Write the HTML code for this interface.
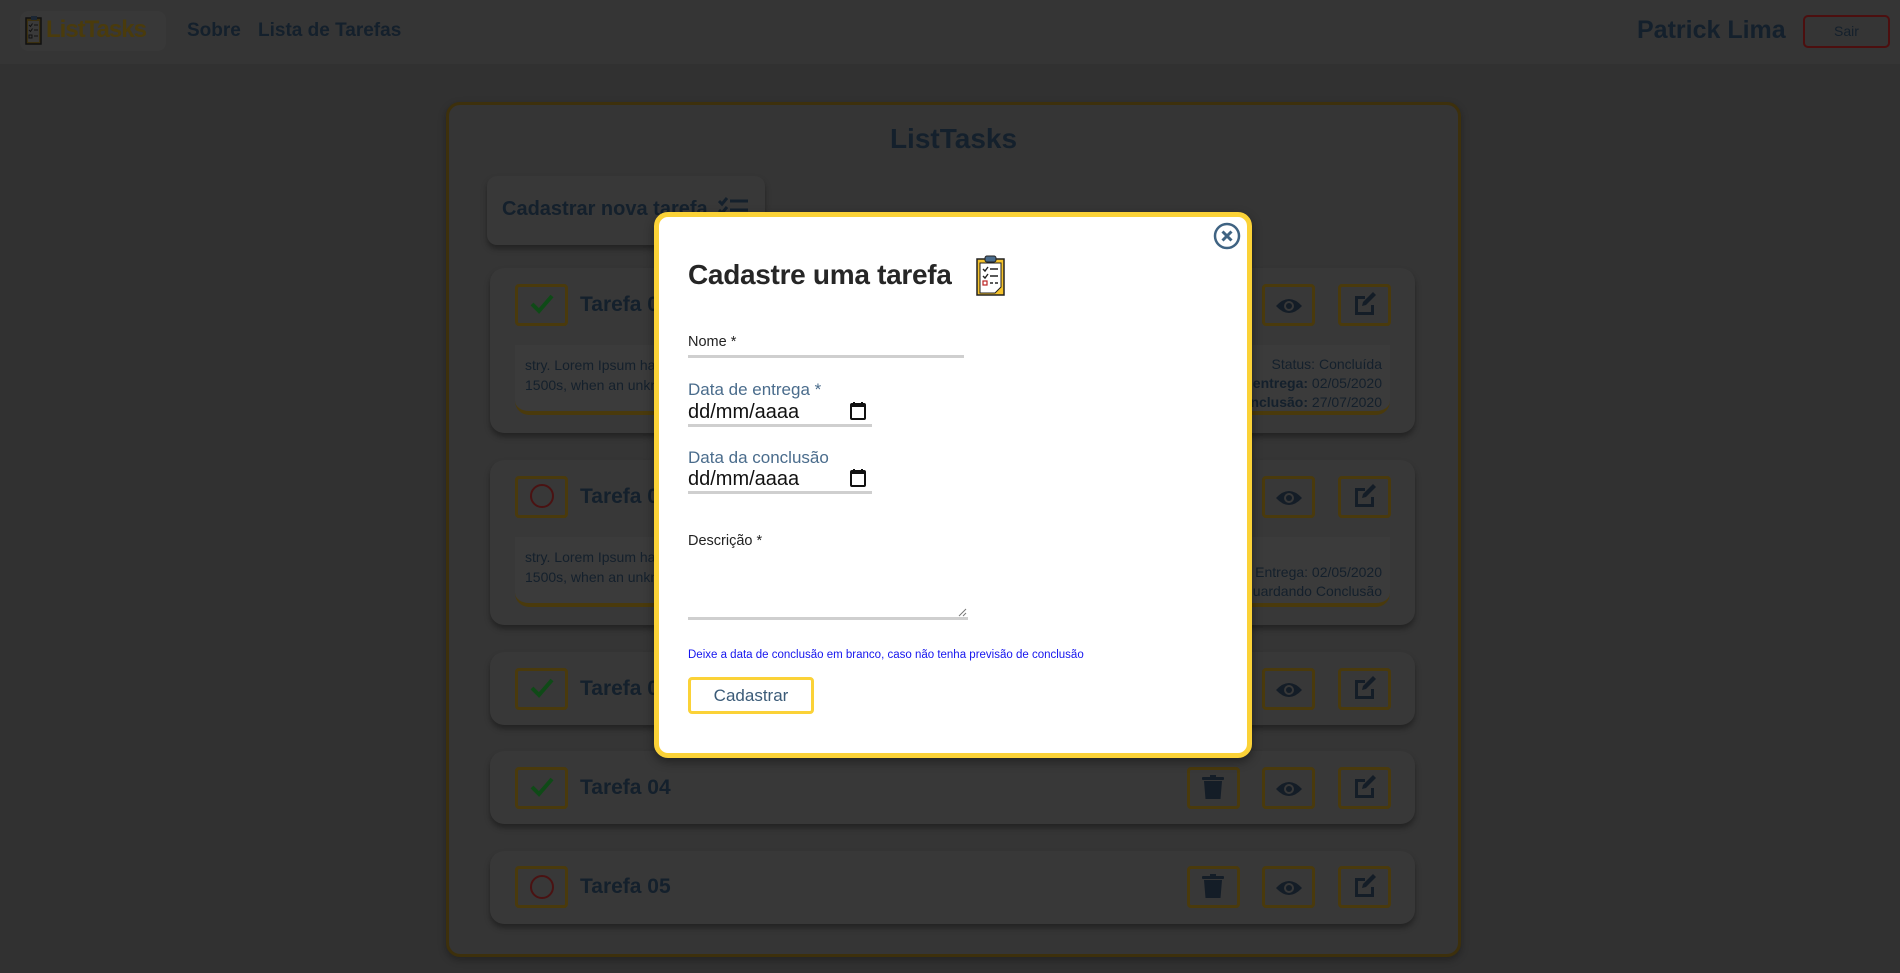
<!DOCTYPE html>
<html><head><meta charset="utf-8"><style>
*{box-sizing:border-box;margin:0;padding:0}
body{width:1900px;height:973px;background:#313131;font-family:"Liberation Sans",sans-serif;position:relative;overflow:hidden;color:#14202c}
.a{position:absolute}
.nav{left:0;top:0;width:1900px;height:64px;background:#353535}
.b{font-weight:bold}
.card{left:490px;width:925px;background:#383838;border-radius:14px;box-shadow:0 4px 6px rgba(0,0,0,.35)}
.sq{width:53px;height:42px;border:3px solid #4a3a0c;border-radius:4px}
.desc{background:#3b3b3b;border-bottom:4px solid #4a3a0c;border-radius:0 0 14px 14px}
.modal{left:654px;top:212px;width:598px;height:546px;background:#fff;border:5px solid #fbd237;border-radius:14px;box-shadow:0 4px 10px rgba(0,0,0,.4)}
.line{background:#cfcfcf;height:3px}
</style></head><body>
<div class="a nav"></div>
<div class="a" style="left:20px;top:11px;width:146px;height:40px;background:#383838;border-radius:8px"></div>
<svg class="a" style="left:25px;top:15px" width="18" height="31" viewBox="0 0 18 31"><rect x="1" y="3" width="15" height="26" fill="#3b3010" stroke="#111" stroke-width="1.5"/><rect x="3" y="6" width="11" height="21" fill="#3a3a3a"/><rect x="6" y="1" width="6" height="4" fill="#1b2633"/><path d="M4 10l1.5 1.5 2-3M4 15l1.5 1.5 2-3M9 10h4M9 15h4M4 20h3v3H4zM9 21h4" stroke="#111" stroke-width="1" fill="none"/></svg>
<div class="a b" style="left:46px;top:16px;font-size:24px;color:#4a3b0c;letter-spacing:-1px">ListTasks</div>
<div class="a b" style="left:187px;top:20px;font-size:19px">Sobre</div>
<div class="a b" style="left:258px;top:20px;font-size:19px">Lista de Tarefas</div>
<div class="a b" style="left:1637px;top:16px;font-size:25px">Patrick Lima</div>
<div class="a" style="left:1803px;top:15px;width:87px;height:33px;border:2px solid #4c0f0f;border-radius:5px;text-align:center;line-height:29px;font-size:14px">Sair</div>

<div class="a" style="left:446px;top:102px;width:1015px;height:855px;background:#353535;border:3px solid #3d300c;border-radius:14px;box-shadow:0 3px 8px rgba(0,0,0,.3)"></div>
<div class="a b" style="left:446px;top:123px;width:1015px;text-align:center;font-size:28px">ListTasks</div>
<div class="a" style="left:487px;top:176px;width:278px;height:69px;background:#383838;border-radius:10px;box-shadow:0 4px 6px rgba(0,0,0,.35)"></div>
<div class="a b" style="left:502px;top:198px;font-size:20px">Cadastrar nova tarefa</div>
<svg class="a" style="left:718px;top:196px" width="32" height="24"><path d="M1 5l3 3 5-6M1 14l3 3 5-6M12 5h18M12 14h18M12 21h18" stroke="#14202c" stroke-width="3" fill="none"/></svg>

<div class="a card" style="top:268px;height:165px"></div>
<div class="a card" style="top:460px;height:165px"></div>
<div class="a card" style="top:652px;height:73px"></div>
<div class="a card" style="top:751px;height:73px"></div>
<div class="a card" style="top:851px;height:73px"></div>
<div class="a desc" style="left:515px;top:345px;width:875px;height:70px"></div>
<div class="a desc" style="left:515px;top:537px;width:875px;height:70px"></div>
<div class="a" style="left:525px;top:355px;font-size:14px;line-height:20px">stry. Lorem Ipsum has been the industry's standard<br>1500s, when an unknown printer took a galley</div>
<div class="a" style="left:525px;top:547px;font-size:14px;line-height:20px">stry. Lorem Ipsum has been the industry's standard<br>1500s, when an unknown printer took a galley</div>
<div class="a" style="left:1160px;top:355px;width:222px;text-align:right;font-size:14px;line-height:19px">Status: Concluída<br><b>Data de entrega:</b> 02/05/2020<br><b>Data de conclusão:</b> 27/07/2020</div>
<div class="a" style="left:1160px;top:563px;width:222px;text-align:right;font-size:14px;line-height:19px">Entrega: 02/05/2020<br>Status: Aguardando Conclusão</div>

<div class="a sq" style="left:515px;top:284px"></div>
<div class="a sq" style="left:515px;top:476px"></div>
<div class="a sq" style="left:515px;top:668px"></div>
<div class="a sq" style="left:515px;top:767px"></div>
<div class="a sq" style="left:515px;top:866px"></div>
<svg class="a" style="left:530px;top:293px" width="24" height="22"><path d="M2 11l7 7L22 3" stroke="#0f4a17" stroke-width="4" fill="none"/></svg>
<svg class="a" style="left:530px;top:677px" width="24" height="22"><path d="M2 11l7 7L22 3" stroke="#0f4a17" stroke-width="4" fill="none"/></svg>
<svg class="a" style="left:530px;top:776px" width="24" height="22"><path d="M2 11l7 7L22 3" stroke="#0f4a17" stroke-width="4" fill="none"/></svg>
<svg class="a" style="left:529px;top:483px" width="26" height="26"><circle cx="13" cy="13" r="11" stroke="#4a1212" stroke-width="2" fill="none"/></svg>
<svg class="a" style="left:529px;top:874px" width="26" height="26"><circle cx="13" cy="13" r="11" stroke="#4a1212" stroke-width="2" fill="none"/></svg>
<div class="a b" style="left:580px;top:293px;font-size:21px">Tarefa 01</div>
<div class="a b" style="left:580px;top:485px;font-size:21px">Tarefa 02</div>
<div class="a b" style="left:580px;top:677px;font-size:21px">Tarefa 03</div>
<div class="a b" style="left:580px;top:776px;font-size:21px">Tarefa 04</div>
<div class="a b" style="left:580px;top:875px;font-size:21px">Tarefa 05</div>

<div class="a sq" style="left:1187px;top:767px"></div><div class="a sq" style="left:1262px;top:767px"></div><div class="a sq" style="left:1338px;top:767px"></div>
<div class="a sq" style="left:1187px;top:866px"></div><div class="a sq" style="left:1262px;top:866px"></div><div class="a sq" style="left:1338px;top:866px"></div>
<div class="a sq" style="left:1262px;top:284px"></div><div class="a sq" style="left:1338px;top:284px"></div>
<div class="a sq" style="left:1262px;top:476px"></div><div class="a sq" style="left:1338px;top:476px"></div>
<div class="a sq" style="left:1262px;top:668px"></div><div class="a sq" style="left:1338px;top:668px"></div>
<svg width="0" height="0" style="position:absolute"><defs>
<g id="tr"><rect x="0" y="2" width="22" height="3" rx="1" fill="#141d27"/><rect x="8" y="0" width="6" height="3" fill="#141d27"/><path d="M2 6h18l-1.5 18h-15z" fill="#141d27"/></g>
<g id="ey"><path d="M0 10Q13 -4 26 10Q13 24 0 10z" fill="#141d27"/><circle cx="13" cy="10" r="5" fill="#383838"/><circle cx="13" cy="10" r="3" fill="#141d27"/></g>
<g id="ed"><path d="M2 4h10v3H5v13h13v-7h3v10H2z" fill="#141d27"/><path d="M9 14l1-4 10-10 3 3-10 10z" fill="#141d27"/></g>
</defs></svg>
<svg class="a" style="left:1202px;top:775px" width="24" height="26"><use href="#tr"/></svg>
<svg class="a" style="left:1202px;top:874px" width="24" height="26"><use href="#tr"/></svg>
<svg class="a" style="left:1276px;top:779px" width="26" height="20"><use href="#ey"/></svg>
<svg class="a" style="left:1276px;top:878px" width="26" height="20"><use href="#ey"/></svg>
<svg class="a" style="left:1276px;top:296px" width="26" height="20"><use href="#ey"/></svg>
<svg class="a" style="left:1276px;top:488px" width="26" height="20"><use href="#ey"/></svg>
<svg class="a" style="left:1276px;top:680px" width="26" height="20"><use href="#ey"/></svg>
<svg class="a" style="left:1353px;top:775px" width="24" height="24"><use href="#ed"/></svg>
<svg class="a" style="left:1353px;top:874px" width="24" height="24"><use href="#ed"/></svg>
<svg class="a" style="left:1353px;top:292px" width="24" height="24"><use href="#ed"/></svg>
<svg class="a" style="left:1353px;top:484px" width="24" height="24"><use href="#ed"/></svg>
<svg class="a" style="left:1353px;top:676px" width="24" height="24"><use href="#ed"/></svg>

<div class="a modal"></div>
<svg class="a" style="left:1213px;top:222px" width="28" height="28"><circle cx="14" cy="14" r="12" stroke="#3f6382" stroke-width="2.5" fill="none"/><path d="M9.5 9.5l9 9M18.5 9.5l-9 9" stroke="#3f6382" stroke-width="3"/></svg>
<div class="a b" style="left:688px;top:259px;font-size:28px;color:#262626;letter-spacing:-0.3px">Cadastre uma tarefa</div>
<svg class="a" style="left:975px;top:255px" width="32" height="42" viewBox="0 0 32 42"><rect x="2" y="4" width="27" height="36" fill="#f5c32c" stroke="#222" stroke-width="1.5"/><path d="M5 8h21v24l-6 6H5z" fill="#fff" stroke="#222" stroke-width="1"/><rect x="10" y="1" width="11" height="6" rx="2" fill="#4a6c8c" stroke="#222" stroke-width="1"/><path d="M8 14l2 2 3-4M8 21l2 2 3-4M15 14h8M15 21h8M15 28h3M20 28h3" stroke="#222" stroke-width="1.4" fill="none"/><rect x="8" y="26" width="4" height="4" fill="none" stroke="#b22" stroke-width="1.2"/></svg>
<div class="a" style="left:688px;top:334px;font-size:14.5px;color:#222">Nome *</div>
<div class="a line" style="left:688px;top:355px;width:276px"></div>
<div class="a" style="left:688px;top:380px;font-size:17px;color:#4a6c8c">Data de entrega *</div>
<div class="a" style="left:688px;top:401px;font-size:20px;color:#111">dd/mm/aaaa</div>
<svg class="a" style="left:849px;top:401px" width="18" height="20"><rect x="2" y="3" width="14" height="15" rx="1" fill="none" stroke="#111" stroke-width="2"/><rect x="2" y="3" width="14" height="3" fill="#111"/><path d="M5 1v3M13 1v3" stroke="#111" stroke-width="2"/></svg>
<div class="a line" style="left:688px;top:424px;width:184px"></div>
<div class="a" style="left:688px;top:448px;font-size:17px;color:#4a6c8c">Data da conclusão</div>
<div class="a" style="left:688px;top:468px;font-size:20px;color:#111">dd/mm/aaaa</div>
<svg class="a" style="left:849px;top:468px" width="18" height="20"><rect x="2" y="3" width="14" height="15" rx="1" fill="none" stroke="#111" stroke-width="2"/><rect x="2" y="3" width="14" height="3" fill="#111"/><path d="M5 1v3M13 1v3" stroke="#111" stroke-width="2"/></svg>
<div class="a line" style="left:688px;top:491px;width:184px"></div>
<div class="a" style="left:688px;top:533px;font-size:14.5px;color:#222">Descrição *</div>
<div class="a line" style="left:688px;top:617px;width:280px"></div>
<svg class="a" style="left:958px;top:608px" width="9" height="9"><path d="M1 8L8 1M5 8L8 5" stroke="#777" stroke-width="1"/></svg>
<div class="a" style="left:688px;top:649px;font-size:11.5px;color:#1515ee">Deixe a data de conclusão em branco, caso não tenha previsão de conclusão</div>
<div class="a" style="left:688px;top:677px;width:126px;height:37px;border:3px solid #fbd237;border-radius:4px;text-align:center;line-height:31px;font-size:17px;color:#3b5b78">Cadastrar</div>
</body></html>
